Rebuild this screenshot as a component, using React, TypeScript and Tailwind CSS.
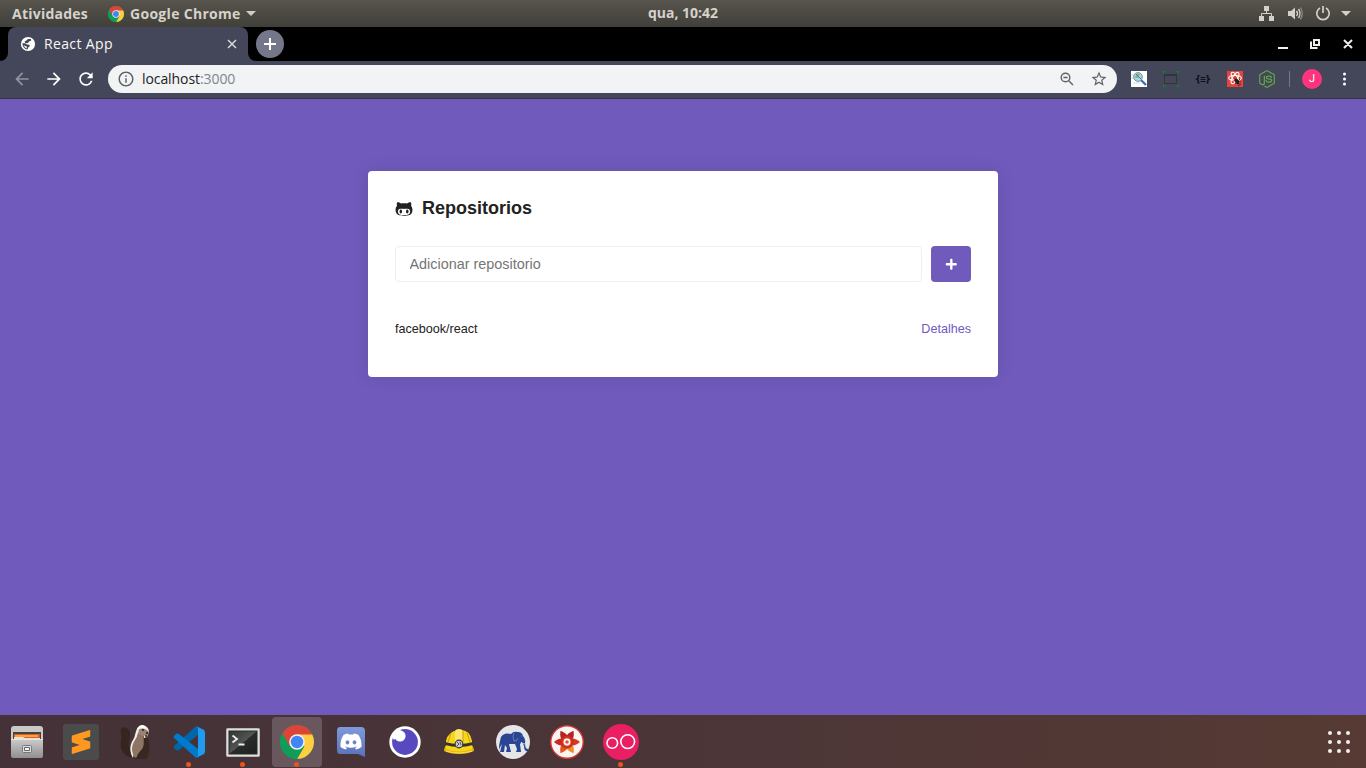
import type { ReactNode } from "react";
import { FaDiscord, FaGithubAlt, FaNodeJs, FaPlus } from "react-icons/fa";
import { MdArrowBack, MdArrowForward, MdRefresh, MdStarBorder, MdInfoOutline } from "react-icons/md";
import { SiSublimetext } from "react-icons/si";

function Chrome({ className }: { className: string }) {
  return (
    <svg viewBox="0 0 48 48" className={className}>
      <circle cx="24" cy="24" r="24" fill="#0f9d58" />
      <path d="M3.2 12A24 24 0 0 1 44.8 12L44.8 14H24L13.6 30Z" fill="#db4437" />
      <path d="M24 13.5H45.6A24 24 0 0 1 24 48L34.4 30Z" fill="#ffcd40" />
      <path d="M3.2 12L13.6 30L24 36L34.4 30L24 48A24 24 0 0 1 3.2 12" fill="#0f9d58" />
      <circle cx="24" cy="24" r="11" fill="#f1f1f1" />
      <circle cx="24" cy="24" r="8.8" fill="#4285f4" />
    </svg>
  );
}

function SystemBar() {
  return (
    <header className="grid h-[27px] shrink-0 grid-cols-[1fr_auto_1fr] items-center bg-gradient-to-b from-[#57554d] to-[#403f39] font-['Open_Sans','Noto_Sans',sans-serif] text-[14px] font-bold text-[#d5d2cb]">
      <div className="flex items-center pl-3">
        <span className="w-24 whitespace-nowrap tracking-[0.24px]">Atividades</span>
        <Chrome className="size-[16px]" />
        <span className="ml-[6px] w-[112px] whitespace-nowrap tracking-[0.3px]">Google Chrome</span>
        <svg className="ml-1 h-[5px] w-[10px]" viewBox="0 0 10 5"><path d="M0 0H10L5 5Z" fill="#d0cdc5" /></svg>
      </div>
      <span className="w-[70px] whitespace-nowrap pb-[2px] tracking-[-0.02px]">qua, 10:42</span>
      <div className="flex items-center justify-end pr-[15px] text-[#d3d0c9]">
        <svg className="mr-3 size-4" viewBox="0 0 16 16" fill="currentColor">
          <path d="M5 0h5v5H5zM0 10h5v5H0zM10 10h5v5h-5z" />
          <path d="M7.5 5v3M2.5 10V7.5h10V10" fill="none" stroke="currentColor" />
        </svg>
        <svg className="mr-3 size-4" viewBox="0 0 16 16">
          <path d="M1 5H4L8 1.5V13.5L4 10H1Z" fill="currentColor" />
          <path d="M9.5 5Q11.5 7.5 9.5 10M11.5 3Q14.5 7.5 11.5 12" fill="none" stroke="currentColor" strokeWidth="1.4" />
          <path d="M13.5 1.5Q17 7.5 13.5 13.5" fill="none" stroke="#88867d" strokeWidth="1.4" />
        </svg>
        <svg className="mr-[10px] size-4" viewBox="0 0 16 16" fill="none" stroke="currentColor" strokeWidth="1.7">
          <path d="M5 2A6.2 6.2 0 1 0 11 2M8 0V7" />
        </svg>
        <svg className="h-[5px] w-[10px]" viewBox="0 0 10 5"><path d="M0 0H10L5 5Z" fill="currentColor" /></svg>
      </div>
    </header>
  );
}

function TabStrip() {
  return (
    <div className="flex h-[34px] shrink-0 items-center bg-black">
      <svg className="size-2 self-end" viewBox="0 0 8 8"><path d="M8 0V8H0A8 8 0 0 0 8 0" fill="#44475a" /></svg>
      <div className="flex h-full w-[240px] items-center rounded-t-lg bg-[#44475a] pl-3 pr-[11px] font-['Open_Sans','Noto_Sans',sans-serif] text-[14px] text-[#f8f8f2]">
        <svg className="size-4 shrink-0" viewBox="0 0 16 16">
          <circle cx="8" cy="8" r="7.1" fill="white" />
          <path d="M8 3H10.8L11.3 4.5L9 5.5L8 7L5.4 7.2L4.6 5.5L6.4 4.5Z" fill="#44475a" />
          <path d="M2.3 7.2H5L7 8.5L9.3 8.8L9.8 10.3L8.2 11.5L7.5 13.6Q3 13 2.3 7.2Z" fill="#44475a" />
          <path d="M3.6 9.2Q4.5 11.5 6.5 12.4L7 10.8Z" fill="white" />
        </svg>
        <span className="ml-2 grow whitespace-nowrap pb-[2px] tracking-[0.36px]">React App</span>
        <svg className="size-[10px]" viewBox="0 0 10 10"><path d="M1 1L9 9M9 1L1 9" stroke="#d7d8dc" strokeWidth="1.5" /></svg>
      </div>
      <svg className="size-2 self-end" viewBox="0 0 8 8"><path d="M0 0V8H8A8 8 0 0 1 0 0" fill="#44475a" /></svg>
      <button className="flex size-7 items-center justify-center rounded-full bg-[#747789]">
        <svg className="size-3" viewBox="0 0 12 12"><path d="M6 0V12M0 6H12" stroke="white" strokeWidth="2" /></svg>
      </button>
      <svg className="ml-auto mr-[13px] h-3 w-[75px]" viewBox="0 0 75 12" fill="none" stroke="#eee" strokeWidth="2">
        <path d="M0 10H10M66 2L74 10M74 2L66 10M36 2H41V7H36Z" />
        <path d="M33 3.5V10H39.5" />
      </svg>
    </div>
  );
}

function Toolbar() {
  return (
    <div className="flex h-[38px] shrink-0 items-center border-b border-[#343543] bg-[#44475a] pb-px">
      <div className="flex w-[108px] items-center gap-3 pl-3 text-white">
        <MdArrowBack className="size-5 text-[#92949f]" />
        <MdArrowForward className="size-5" />
        <MdRefresh className="size-5" />
      </div>
      <div className="flex h-7 w-[1009px] items-center rounded-full bg-[#f1f3f4] pl-[9px] pr-[9px] text-[#5f6368]">
        <MdInfoOutline className="size-[18px]" />
        <span className="ml-[7px] grow whitespace-nowrap pb-[2px] font-['Open_Sans','Noto_Sans',sans-serif] text-[14px] tracking-[-0.08px] text-[#202124]">localhost<span className="text-[#80868b]">:3000</span></span>
        <svg className="mr-4 size-[14px]" viewBox="0 0 14 14" fill="none" stroke="currentColor" strokeWidth="1.4">
          <circle cx="5.5" cy="5.5" r="4.3" /><path d="M8.7 8.7L13 13M3.4 5.5H7.6" />
        </svg>
        <MdStarBorder className="size-[18px]" />
      </div>
      <div className="flex items-center pl-[14px]">
        <div className="mr-4 flex size-4 bg-white">
          <svg className="size-4" viewBox="0 0 16 16">
            <path d="M0 4H5M0 7H5M2 12H9" stroke="#d4d8da" />
            <circle cx="7" cy="6" r="4.4" fill="#a8d4e7" stroke="#7d929e" />
            <path d="M4 7Q5 2 9 3L7 7Z" fill="#8fb86a" /><path d="M5 3L10 8" stroke="#3f78b5" />
            <path d="M10.2 9.2L15 14" stroke="#386fa8" strokeWidth="2.3" />
          </svg>
        </div>
        <svg className="mr-4 size-4" viewBox="0 0 16 16" fill="none">
          <rect x="1.5" y="3.5" width="12" height="9" stroke="#343434" /><path d="M1 4H14" stroke="#343434" strokeWidth="2" />
          <path d="M.5 3V.5H3M12.5 .5H15.5V3M.5 13V15.5H3M12.5 15.5H15.5V13" stroke="#18783a" strokeWidth="1.2" />
        </svg>
        <svg className="mr-4 size-4" viewBox="0 0 16 16" fill="none" stroke="#121318" strokeWidth="1.4">
          <path d="M4.5 4.7H3.2V7.2L1.6 8.2L3.2 9.2V11.7H4.5M11.5 4.7H12.8V7.2L14.4 8.2L12.8 9.2V11.7H11.5" />
          <path d="M5.5 6.5H10.5M5.5 8.5H10.5M5.5 10.5H10.5" strokeWidth="1" />
        </svg>
        <svg className="mr-4 size-4" viewBox="0 0 16 16" fill="none">
          <path d="M0 0H16V16H0Z" fill="#e6433c" />
          <g stroke="white" strokeWidth="1.1"><ellipse cx="8" cy="7" rx="6.3" ry="2.5" /><ellipse cx="8" cy="7" rx="6.3" ry="2.5" transform="rotate(60 8 7)" /><ellipse cx="8" cy="7" rx="6.3" ry="2.5" transform="rotate(120 8 7)" /></g>
          <ellipse cx="10" cy="10.5" rx="2" ry="3.2" fill="#301c1b" transform="rotate(-30 10 10.5)" />
          <path d="M6.5 9.5L14 11M8 13L13 8M7.5 7.5L10 9M11 15L14 13" stroke="#301c1b" strokeWidth=".8" />
        </svg>
        <FaNodeJs className="-mx-px size-[18px] text-[#62a947]" />
      </div>
      <div className="ml-[14px] h-4 w-px bg-[#777989]" />
      <span className="ml-3 flex size-5 items-center justify-center rounded-full bg-[#ff347c] font-['Roboto',sans-serif] text-[11px] text-white">J</span>
      <svg className="ml-[21px] h-[14px] w-[3px]" viewBox="0 0 3 14" fill="white"><circle cx="1.5" cy="2" r="1.5" /><circle cx="1.5" cy="7" r="1.5" /><circle cx="1.5" cy="12" r="1.5" /></svg>
    </div>
  );
}

function RepositoryPage() {
  return (
    <main className="flex grow justify-center bg-[#705abc] pt-[72px] font-['Liberation_Sans',sans-serif] text-[#222]">
      <section className="h-[206px] w-[630px] rounded-[4px] bg-white p-[27px] shadow-[0_0_18px_rgba(0,0,0,0.1)]">
        <h1 className="flex h-[21px] items-center text-[18px] font-bold leading-[21px]">
          <FaGithubAlt className="mr-[9px] size-[18px]" />Repositorios
        </h1>
        <form className="mt-[27px] flex gap-[9px]">
          <input placeholder="Adicionar repositorio" className="h-9 min-w-0 grow rounded-[4px] border border-[#eee] px-[13.5px] text-[14.4px] placeholder:text-[#757575]" />
          <button type="button" className="flex h-9 w-10 items-center justify-center rounded-[4px] bg-[#705abc] text-white"><FaPlus className="size-[12.6px]" /></button>
        </form>
        <div className="mt-10 flex justify-between text-[12.6px] leading-[15px]">
          <span>facebook/react</span><a className="text-[#7159c1]">Detalhes</a>
        </div>
      </section>
    </main>
  );
}

function DockItem({ children, active, running }: { children: ReactNode; active?: boolean; running?: boolean }) {
  return (
    <div className={`relative mx-[2px] flex h-[50px] w-[50px] items-center justify-center rounded-[4px] ${active ? "bg-[#68575c]" : ""}`}>
      {children}
      {running && <span className="absolute bottom-0 left-[22px] size-[5px] rounded-full bg-[#e95420]" />}
    </div>
  );
}

function Dock() {
  return (
    <footer className="flex h-[53px] shrink-0 items-center bg-gradient-to-r from-[#443238] via-[#4b3537] to-[#563a33] pt-px">
      <DockItem>
        <svg className="size-9" viewBox="0 0 36 36">
          <defs><linearGradient id="drawer" x2="0" y2="1"><stop stopColor="#ccc" /><stop offset="1" stopColor="#909090" /></linearGradient></defs>
          <path d="M5 2H31Q34 2 34 5V16H2V5Q2 2 5 2" fill="#c9c9c7" />
          <path d="M4 8H32V15H4Z" fill="#454340" /><path d="M5 10H31V15H5Z" fill="#d6611d" /><path d="M6 11H29V13H6Z" fill="#f9a24e" /><path d="M5 13L14 13L16 14H31V15H5Z" fill="#eee1cf" />
          <path d="M2 15H34V32Q34 34 31 34H5Q2 34 2 32Z" fill="url(#drawer)" />
          <path d="M2 15.5H34" stroke="#e4e4e4" /><rect x="13.5" y="21.5" width="9" height="7" rx="1" fill="#ddd" stroke="#777" /><path d="M15.5 23.5H20.5V26.5H15.5Z" fill="#f8f8f8" stroke="#666" />
        </svg>
      </DockItem>
      <DockItem><div className="flex size-9 items-center justify-center rounded-[3px] bg-[#4b4b4b]"><SiSublimetext className="size-6 text-[#ff9820]" /></div></DockItem>
      <DockItem>
        <svg className="size-9" viewBox="0 0 36 36">
          <path d="M17 34C6 33 2 24 4 17C5 12 3 8 4 5C7 1 13 5 13 10C13 15 11 20 13 25Z" fill="#342521" />
          <path d="M17 34L19 16L22 7L29 7L30 13C33 18 33 27 31 31Q32 35 27 35H16Z" fill="#382821" />
          <path d="M16 34C13 29 12 22 16 16C19 12 18 4 23 1.5C27 0 31 3 32 7L30 13L27 14V11L21 9Z" fill="#f2eee5" />
          <path d="M18 34C14 28 14 22 18 16L22 9L27 11C26 16 28 21 25 25C23 28 20 30 20 33Z" fill="#8d7465" />
          <path d="M21 10L22 5Q28 3 32 8L31 11L26 12Z" fill="#9b8373" /><path d="M25 6H27M29 9L31 9M28 12H30" stroke="#241b19" strokeWidth="1.5" />
          <path d="M21 5L23 3H28" fill="none" stroke="white" strokeWidth="1.8" />
        </svg>
      </DockItem>
      <DockItem running>
        <svg className="size-8" viewBox="0 0 32 32">
          <path d="M1 20Q0 21 1 22L3 24Q4 25 6 24L25 9V1Q23 0 22 1Z" fill="#0065a9" />
          <path d="M1 12Q0 11 1 10L3 8Q4 7 6 8L25 23V31Q23 32 22 31Z" fill="#007acc" />
          <path d="M23 0L31 4Q32 5 32 7V25Q32 27 31 28L23 32Q25 31 25 29V3Q25 1 23 0" fill="#1f9cf0" />
        </svg>
      </DockItem>
      <DockItem running>
        <svg className="mt-px h-[30px] w-[34px]" viewBox="0 0 34 30">
          <defs><linearGradient id="screen" x2="1" y2="1"><stop stopColor="#303433" /><stop offset=".5" stopColor="#515554" /><stop offset=".51" stopColor="#292c2b" /><stop offset="1" stopColor="#1d2020" /></linearGradient></defs>
          <rect x=".5" y=".5" width="33" height="28" rx="1" fill="#dededb" stroke="#b8b8b5" /><rect x="3" y="3" width="28" height="23" fill="url(#screen)" stroke="#292c2c" />
          <path d="M6.5 7.5L11 11L6.5 14.5M12.5 16.5H18.5" fill="none" stroke="#eee" strokeWidth="1.8" />
        </svg>
      </DockItem>
      <DockItem active running><Chrome className="size-[34px]" /></DockItem>
      <DockItem>
        <svg className="size-8" viewBox="0 0 32 32">
          <defs><linearGradient id="discord" x2="0" y2="1"><stop stopColor="#7f9bdb" /><stop offset="1" stopColor="#5870b9" /></linearGradient></defs>
          <path d="M5 1H26Q30 1 30 5V31L23 28H5Q2 28 2 24V5Q2 1 5 1" fill="url(#discord)" />
          <FaDiscord x={4.5} y={4} size={23} color="white" />
        </svg>
      </DockItem>
      <DockItem>
        <svg className="size-8" viewBox="0 0 32 32"><circle cx="16" cy="16" r="15.7" fill="white" /><circle cx="16" cy="16" r="12.9" fill="#5849be" /><circle cx="11" cy="10" r="5.6" fill="white" /><path d="M3 11L9 3L13 5L5 14Z" fill="white" /></svg>
      </DockItem>
      <DockItem>
        <svg className="h-7 w-8" viewBox="0 0 32 28">
          <path d="M3 17Q1 20 1 23Q7 26 16 26T31 23Q31 20 29 17Z" fill="#e5b90b" />
          <path d="M3 21V13Q5 3 16 2T29 13V21Q16 26 3 21" fill="#f7d51c" />
          <path d="M12 13V3Q13 1 16 1T20 3V13Z" fill="#ffe568" /><path d="M20 3V14M8 5L5 14M24 5L27 14" stroke="#c99b0d" fill="none" />
          <path d="M2 14Q16 18 30 14V17Q16 21 2 17Z" fill="#36342e" /><circle cx="16" cy="16" r="4.4" fill="#333" /><circle cx="16" cy="16" r="3.3" fill="#c7c9cb" /><path d="M14 14L16 16L14 18M17 14L18 17" stroke="#555" fill="none" /><path d="M3 23Q16 27 29 23" stroke="#f9df57" fill="none" />
        </svg>
      </DockItem>
      <DockItem>
        <svg className="size-[34px]" viewBox="0 0 34 34">
          <circle cx="17" cy="17" r="17" fill="#e5e6e8" />
          <path d="M5 12Q8 7 15 9Q17 6 22 7Q26 7 27 11Q30 14 29 18Q29 24 32 24V26Q28 27 28 21L26 17L24 19L25 27H20L21 24L19 19H13L15 27H10L11 23L9 20L8 27H4L6 19Q3 24 3 25Q3 19 4 16Z" fill="#294594" />
          <path d="M18 8Q16 11 18 16Q21 17 22 13M25 11H26" fill="none" stroke="#8c9cc4" strokeWidth=".6" />
          <path d="M25 17Q26 19 29 19" fill="none" stroke="#e5e6e8" strokeWidth=".8" />
        </svg>
      </DockItem>
      <DockItem>
        <svg className="size-[34px]" viewBox="0 0 34 34">
          <circle cx="17" cy="17" r="16.2" fill="#f8f5f3" stroke="#dc3430" strokeWidth="1.3" />
          <g transform="translate(17 17)">
            <path d="M0 0C-5 -4 -4 -8 0 -13C4 -8 5 -4 0 0" fill="#b82023" transform="rotate(-30)" />
            <path d="M0 0C-5 -4 -4 -8 0 -13C4 -8 5 -4 0 0" fill="#b82023" transform="rotate(30)" />
            <path d="M0 0C-5 -4 -4 -8 0 -13C4 -8 5 -4 0 0" fill="#d83722" transform="rotate(90)" />
            <path d="M0 0C-5 -4 -4 -8 0 -13C4 -8 5 -4 0 0" fill="#f5881e" transform="rotate(150)" />
            <path d="M0 0C-5 -4 -4 -8 0 -13C4 -8 5 -4 0 0" fill="#e65520" transform="rotate(210)" />
            <path d="M0 0C-5 -4 -4 -8 0 -13C4 -8 5 -4 0 0" fill="#c82822" transform="rotate(270)" />
            <circle r="6.5" fill="#c72e21" /><circle r="4.5" fill="#e84c2e" /><circle r="2.6" fill="none" stroke="white" strokeWidth="1.6" />
          </g>
        </svg>
      </DockItem>
      <DockItem running>
        <svg className="size-9" viewBox="0 0 36 36"><circle cx="18" cy="18" r="18" fill="#e91e63" /><g fill="none" stroke="white" strokeWidth="1.6"><circle cx="9.3" cy="19" r="5.3" /><circle cx="24.7" cy="17.6" r="6.9" /></g></svg>
      </DockItem>
      <div className="ml-auto mr-4 grid grid-cols-3 gap-[4.5px]">
        {Array.from({ length: 9 }, (_, i) => <span key={i} className="size-[4.5px] rounded-full bg-[#f2efed]" />)}
      </div>
    </footer>
  );
}

export default function App() {
  return <div className="flex h-screen w-screen flex-col overflow-hidden"><SystemBar /><TabStrip /><Toolbar /><RepositoryPage /><Dock /></div>;
}
